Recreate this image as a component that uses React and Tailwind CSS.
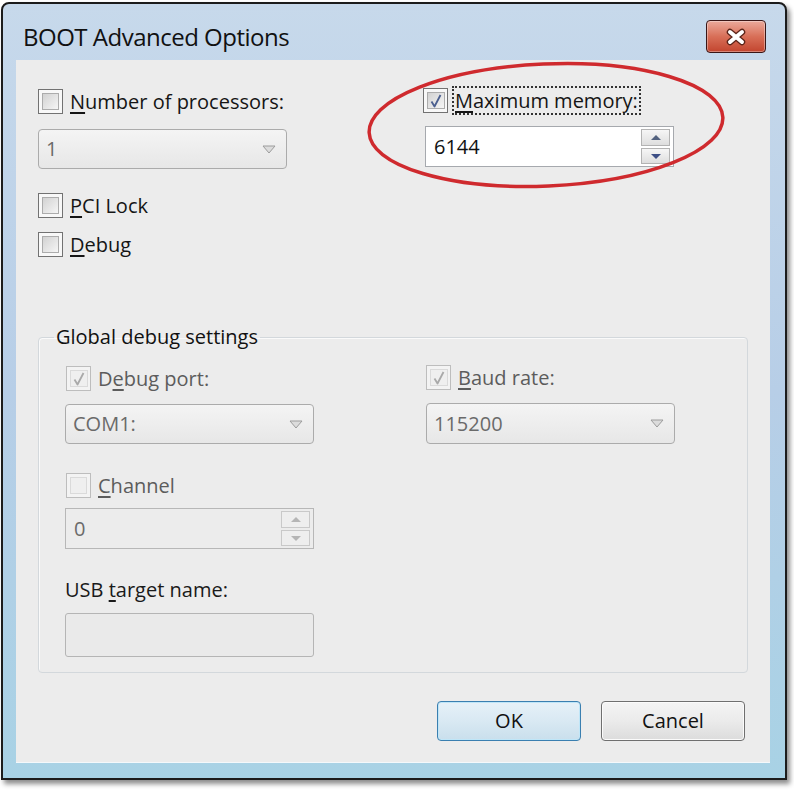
import React from "react"

const font = { fontFamily: "'Open Sans', 'Noto Sans', sans-serif" }

const Tick = ({ color }) => (
  <svg width="16" height="16" viewBox="0 0 16 16">
    <path d="M3.5 8.5 L6.5 13.5 L12.5 2" fill="none" stroke={ color } strokeWidth="1.8" strokeLinejoin="round"/>
  </svg>
)

const Box = ({ checked, disabled }) => (
  <span className={ `w-[25px] h-[25px] shrink-0 flex p-[3px] border-[1.5px] ${ disabled ? "border-[#bdbdbd] bg-[#f3f3f3]" : "border-[#727272] bg-[#f8f8f8]" }` }>
    <span className={ `flex-1 flex items-center justify-center border ${ disabled ? "border-[#dadada] bg-[#efefef]" : "border-[#acacac] bg-gradient-to-br from-[#d2d2d2] to-[#f6f6f6]" }` }>
      { checked && <Tick color={ disabled ? "#a9a9a9" : "#4b5f8f" }/> }
    </span>
  </span>
)

const Key = ({ children }) => (
  <span className="underline underline-offset-[3px] decoration-[1.5px]">{ children }</span>
)

const CheckRow = ({ checked, disabled, focus, children, className = "" }) => (
  <div className={ `flex items-center gap-[6px] h-[25px] ${ className }` }>
    <Box checked={ checked } disabled={ disabled }/>
    <span className={ `leading-[25px] px-[1px] ${ disabled ? "text-[#5c5c5c]" : "text-[#151515]" } ${ focus ? "outline-2 outline-dotted outline-[#333]" : "" }` }>
      { children }
    </span>
  </div>
)

const Combo = ({ value, className = "" }) => (
  <div className={ `w-[249px] h-[40px] rounded-[4px] border border-[#ababab] bg-gradient-to-b from-[#f4f4f4] to-[#e7e7e7] flex items-center justify-between pl-[7px] pr-[10px] text-[#6a6a6a] ${ className }` }>
    <span>{ value }</span>
    <svg width="14" height="9" viewBox="0 0 14 9">
      <path d="M1 1 H13 L7 8 Z" fill="#dcdcdc" stroke="#9c9c9c" strokeLinejoin="round"/>
    </svg>
  </div>
)

const Arrow = ({ up, color }) => (
  <svg width="12" height="7" viewBox="0 0 12 7">
    <path d={ up ? "M1 6 H11 L6 1 Z" : "M1 1 H11 L6 6 Z" } fill={ color }/>
  </svg>
)

const Spin = ({ value, disabled, className = "" }) => (
  <div className={ `w-[249px] h-[41px] border flex items-center justify-between pl-[8px] pr-[3px] ${ disabled ? "border-[#b7b7b7] bg-[#ececec] text-[#6a6a6a]" : "border-[#a6a9ae] bg-white text-[#111]" } ${ className }` }>
    <span>{ value }</span>
    <div className="flex flex-col gap-[2px]">
      <span className={ `w-[29px] h-[17px] border flex items-center justify-center ${ disabled ? "border-[#c9c9c9] bg-[#eeeeee]" : "border-[#b3b3b3] bg-gradient-to-b from-[#f6f6f6] to-[#dedede]" }` }>
        <Arrow up color={ disabled ? "#b5b5b5" : "#53627f" }/>
      </span>
      <span className={ `w-[29px] h-[16px] border flex items-center justify-center ${ disabled ? "border-[#c9c9c9] bg-[#eeeeee]" : "border-[#b3b3b3] bg-gradient-to-b from-[#f6f6f6] to-[#dedede]" }` }>
        <Arrow color={ disabled ? "#b5b5b5" : "#3d4f86" }/>
      </span>
    </div>
  </div>
)

export default function App() {
  return (
    <div className="w-[794px] h-[790px] bg-white pt-[2px] pl-[1px] text-[20px]" style={ font }>
      <div className="relative w-[786px] h-[778px] border-2 border-[#1c1c1c] rounded-t-[8px] bg-gradient-to-b from-[#c7d9eb] via-[#b7cee7] to-[#a8d2e5] shadow-[3px_4px_5px_rgba(0,0,0,0.45)] flex flex-col">

        <div className="h-[56px] flex items-start justify-between pl-[20px] pr-[19px]">
          <span className="mt-[18px] text-[24px] leading-[30px] text-[#111] tracking-[-0.5px]">BOOT Advanced Options</span>
          <button className="mt-[16px] w-[60px] h-[33px] rounded-[4px] border border-[#3a1616] bg-gradient-to-b from-[#eaa99b] via-[#d86f58] to-[#c2442e] shadow-[inset_0_0_0_1px_rgba(255,255,255,0.35)] flex items-center justify-center">
            <svg width="26" height="20" viewBox="0 0 26 20">
              <path d="M7 5 L19 15 M19 5 L7 15" stroke="#5a2318" strokeWidth="6.5" strokeLinecap="round"/>
              <path d="M7 5 L19 15 M19 5 L7 15" stroke="#fff" strokeWidth="4" strokeLinecap="round"/>
            </svg>
          </button>
        </div>

        <div className="ml-[13px] mr-[15px] h-[703px] bg-[#ececec] border-b border-[#f4f8fb] flex flex-col">

          <div className="grid grid-cols-[385px_1fr] pl-[22px] pt-[28px]">
            <div className="flex flex-col">
              <CheckRow className="mt-[1px]"><Key>N</Key>umber of processors:</CheckRow>
              <Combo value="1" className="mt-[15px]"/>
              <CheckRow className="mt-[24px]"><Key>P</Key>CI Lock</CheckRow>
              <CheckRow className="mt-[14px]"><Key>D</Key>ebug</CheckRow>
            </div>
            <div className="flex flex-col">
              <CheckRow checked focus><Key>M</Key>aximum memory:</CheckRow>
              <Spin value="6144" className="mt-[13px] ml-[2px] w-[248px]"/>
            </div>
          </div>

          <fieldset className="mt-[67px] ml-[22px] w-[710px] h-[349px] border border-[#d3d8dc] rounded-[4px] shadow-[inset_1px_1px_0_#fafafa] px-[26px]">
            <legend className="ml-[-11px] px-[2px] leading-[26px] text-[#111]">Global debug settings</legend>
            <div className="grid grid-cols-[361px_1fr] mt-[15px]">
              <div className="flex flex-col">
                <CheckRow checked disabled className="ml-[1px] mt-[1px]">D<Key>e</Key>bug port:</CheckRow>
                <Combo value="COM1:" className="mt-[13px]"/>
              </div>
              <div className="flex flex-col">
                <CheckRow checked disabled><Key>B</Key>aud rate:</CheckRow>
                <Combo value="115200" className="mt-[13px] w-[248px] h-[41px]"/>
              </div>
            </div>
            <CheckRow disabled className="ml-[1px] mt-[29px]"><Key>C</Key>hannel</CheckRow>
            <Spin value="0" disabled className="mt-[10px]"/>
            <div className="mt-[28px] leading-[26px] text-[#1a1a1a]">USB <Key>t</Key>arget name:</div>
            <div className="mt-[10px] w-[249px] h-[44px] rounded-[3px] border border-[#b5b5b5] bg-[#eaeaea]"/>
          </fieldset>

          <div className="flex justify-end gap-[20px] pr-[25px] mt-[28px]">
            <button className="w-[144px] h-[40px] rounded-[4px] border border-[#3a7fb0] bg-gradient-to-b from-[#e6f1f8] via-[#d9e9f3] to-[#c9dfec] shadow-[inset_0_0_0_1px_#bfe6f8] text-[#111]">OK</button>
            <button className="w-[144px] h-[40px] rounded-[4px] border border-[#6f6f6f] bg-gradient-to-b from-[#f4f4f4] via-[#ebebeb] to-[#dcdcdc] shadow-[inset_0_0_0_1px_#fbfbfb] text-[#111]">Cancel</button>
          </div>
        </div>

        <svg className="absolute left-[362px] top-[56px] pointer-events-none" width="362" height="130" viewBox="0 0 362 130">
          <ellipse cx="181" cy="65" rx="177" ry="61" fill="none" stroke="#cf2a2e" strokeWidth="3.5" transform="rotate(-2.5 181 65)"/>
        </svg>
      </div>
    </div>
  )
}
